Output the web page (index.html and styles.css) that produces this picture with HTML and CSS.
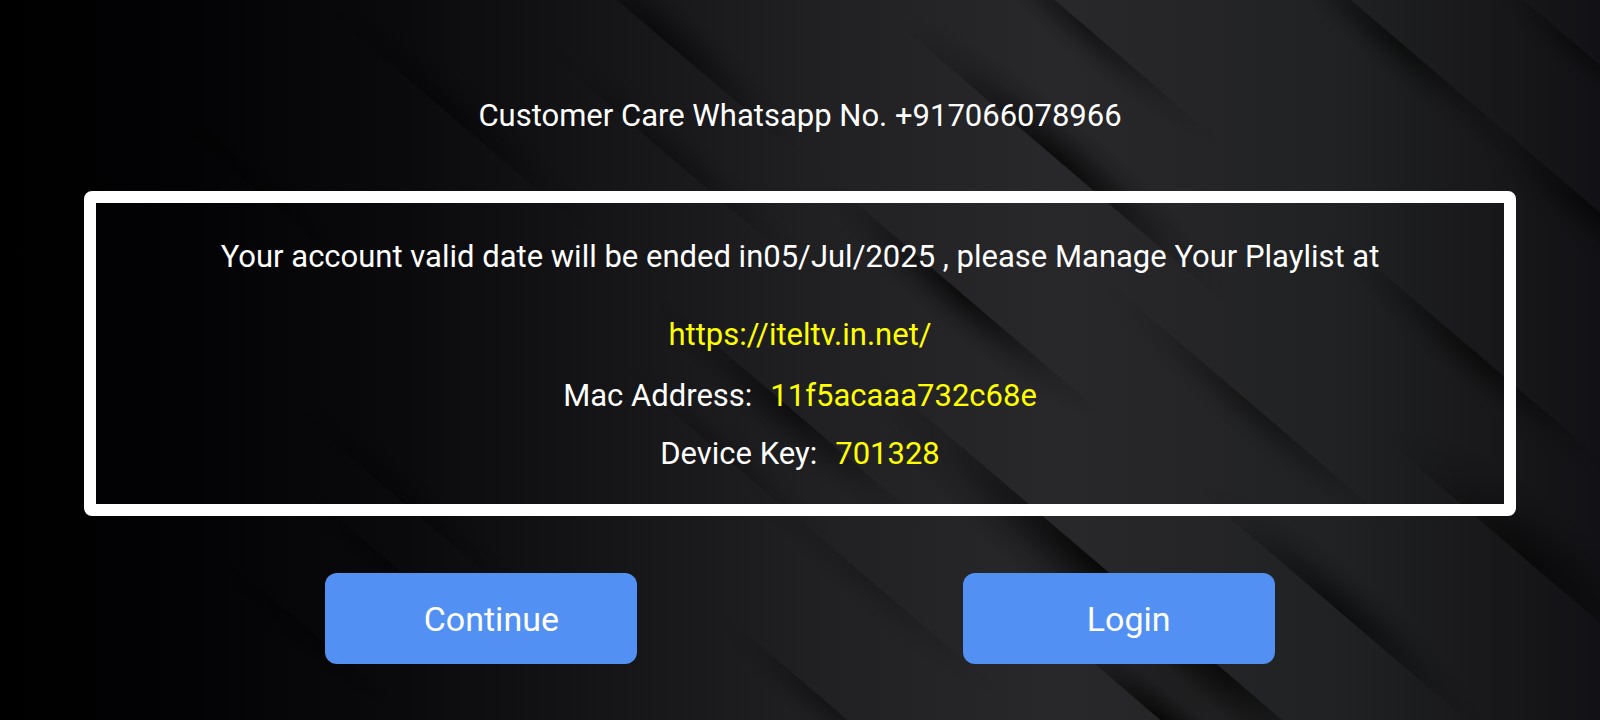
FILE: index.html
```html
<!DOCTYPE html>
<html lang="en">

<head>
    <meta charset="utf-8">
    <title>Account Status</title>
    <link rel="stylesheet" href="styles.css">
</head>

<body>
    <!-- Dark layered background -->
    <svg class="backdrop" viewBox="0 0 1600 720" preserveAspectRatio="none" aria-hidden="true">
        <defs>
            <linearGradient id="base">
                <stop offset="0" stop-color="#000001" />
                <stop offset="0.12" stop-color="#030204" />
                <stop offset="0.25" stop-color="#0a090c" />
                <stop offset="0.4" stop-color="#171619" />
                <stop offset="0.52" stop-color="#212023" />
                <stop offset="0.66" stop-color="#28272a" />
                <stop offset="0.75" stop-color="#252527" />
                <stop offset="0.84" stop-color="#1f2122" />
                <stop offset="0.92" stop-color="#19191b" />
                <stop offset="1" stop-color="#121216" />
            </linearGradient>
            <radialGradient id="fade" gradientUnits="userSpaceOnUse" cx="0" cy="0" r="1">
                <stop offset="0" stop-color="#000" stop-opacity="0.8" />
                <stop offset="0.3" stop-color="#000" stop-opacity="0.5" />
                <stop offset="0.65" stop-color="#000" stop-opacity="0.16" />
                <stop offset="1" stop-color="#000" stop-opacity="0" />
            </radialGradient>
            <path id="shade" d="M-1 0A1 1 0 0 1 1 0Z" fill="url(#fade)" />
        </defs>
        <rect width="1600" height="720" fill="url(#base)" />

        <!-- shadows above an edge -->
        <use href="#shade" transform="translate(665 41) rotate(40.5) scale(180 40)" opacity="0.7" />
        <use href="#shade" transform="translate(450 115) rotate(40.5) scale(200 40)" opacity="0.55" />
        <use href="#shade" transform="translate(670 157) rotate(40.5) scale(190 34)" opacity="0.4" />
        <use href="#shade" transform="translate(1060 162) rotate(40.5) scale(220 44)" opacity="0.9" />
        <use href="#shade" transform="translate(1165 724) rotate(40.5) scale(160 44)" />
        <use href="#shade" transform="translate(1340 612) rotate(40.5) scale(190 42)" opacity="0.75" />
        <use href="#shade" transform="translate(1530 563) rotate(40.5) scale(200 64)" opacity="0.75" />
        <use href="#shade" transform="translate(725 457) rotate(40.5) scale(160 28)" opacity="0.3" />
        <use href="#shade" transform="translate(400 500) rotate(40.5) scale(190 36)" opacity="0.5" />
        <use href="#shade" transform="translate(250 185) rotate(40.5) scale(150 30)" opacity="0.5" />

        <!-- shadows below an edge -->
        <use href="#shade" transform="translate(1085 26) rotate(40.5) scale(180 -32)" opacity="0.6" />
        <use href="#shade" transform="translate(1400 42) rotate(40.5) scale(190 -36)" opacity="0.7" />
        <use href="#shade" transform="translate(1590 204) rotate(40.5) scale(170 -44)" opacity="0.7" />
        <use href="#shade" transform="translate(1580 48) rotate(40.5) scale(130 -30)" opacity="0.5" />
        <use href="#shade" transform="translate(960 292) rotate(40.5) scale(190 -38)" opacity="0.85" />
        <use href="#shade" transform="translate(1255 407) rotate(40.5) scale(200 -34)" opacity="0.5" />
        <use href="#shade" transform="translate(1480 356) rotate(40.5) scale(200 -36)" opacity="0.7" />
        <use href="#shade" transform="translate(1100 565) rotate(40.5) scale(310 -62)" />
        <use href="#shade" transform="translate(1225 671) rotate(40.5) scale(150 -56)" opacity="0.7" />
        <use href="#shade" transform="translate(790 408) rotate(40.5) scale(180 -40)" opacity="0.7" />
        <use href="#shade" transform="translate(870 580) rotate(40.5) scale(190 -32)" opacity="0.25" />
        <use href="#shade" transform="translate(830 705) rotate(40.5) scale(150 -32)" opacity="0.5" />
        <use href="#shade" transform="translate(378 552) rotate(40.5) scale(130 -28)" opacity="0.55" />
        <use href="#shade" transform="translate(300 622) rotate(40.5) scale(150 -32)" opacity="0.55" />
    </svg>

    <main class="page">
        <p class="support">Customer Care Whatsapp No. +917066078966</p>

        <section class="panel">
            <p class="notice">Your account valid date will be ended in05/Jul/2025 , please Manage Your Playlist at</p>
            <a class="playlist-link" href="https://iteltv.in.net/">https://iteltv.in.net/</a>
            <dl class="details">
                <div class="row">
                    <dt>Mac Address:</dt>
                    <dd>11f5acaaa732c68e</dd>
                </div>
                <div class="row">
                    <dt>Device Key:</dt>
                    <dd>701328</dd>
                </div>
            </dl>
        </section>

        <div class="actions">
            <button type="button">Continue</button>
            <button type="button">Login</button>
        </div>
    </main>
</body>

</html>
```
FILE: styles.css
```css
* {
    box-sizing: border-box;
}

body {
    margin: 0;
    position: relative;
    min-height: 100vh;
    background-color: #000;
    color: #fff;
    font-family: Roboto, sans-serif;
    font-size: 31px;
    line-height: 38px;
}

p,
dl,
dd {
    margin: 0;
}

.backdrop {
    position: absolute;
    inset: 0;
    width: 100%;
    height: 100%;
}

.page {
    position: relative;
    display: flex;
    flex-direction: column;
    padding: 97px 84px 56px;
    text-align: center;
}

.panel {
    display: flex;
    flex-direction: column;
    align-items: center;
    margin-top: 56px;
    padding: 35px 20px 31px;
    border: 12px solid #fff;
    border-radius: 8px;
}

.playlist-link {
    margin-top: 40px;
    color: #ff0;
    text-decoration: none;
}

.details {
    display: flex;
    flex-direction: column;
    gap: 20px;
    margin-top: 23px;
}

.row {
    display: flex;
    justify-content: center;
    gap: 18px;
}

.row dd {
    color: #ff0;
}

.actions {
    display: flex;
    justify-content: space-evenly;
    margin: 57px -84px 0;
}

button {
    width: 312px;
    height: 91px;
    padding: 0 0 0 20px;
    border: none;
    border-radius: 12px;
    background-color: #5291f3;
    color: #fff;
    font-family: inherit;
    font-size: 34px;
    cursor: pointer;
}

button:hover {
    background-color: #3f82ea;
}
```
